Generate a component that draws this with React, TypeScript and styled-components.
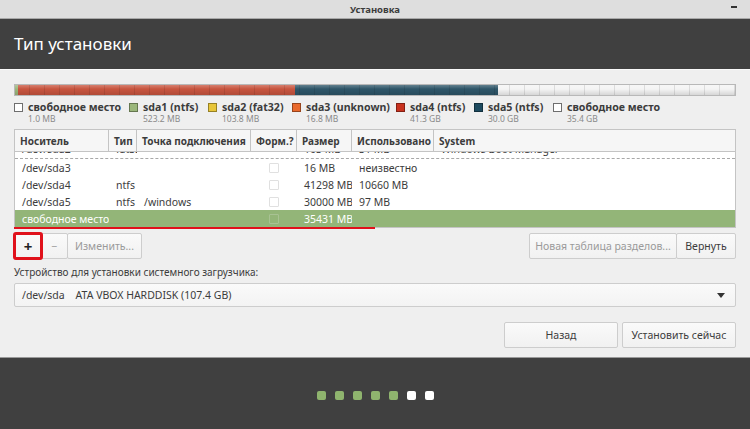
import React from "react";
import styled, { createGlobalStyle, css } from "styled-components";

const FONT = `"Noto Sans", "DejaVu Sans", sans-serif`;
const DARK = "#404040";
const CONTENT_BG = "#efefef";
const BORDER = "#c4c4c4";

const GlobalStyle = createGlobalStyle`
  html, body { margin: 0; padding: 0; background: ${CONTENT_BG}; }
  body { font-family: ${FONT}; }
  * { box-sizing: border-box; }
`;

const Window = styled.div`
  display: flex;
  flex-direction: column;
  width: 750px;
  height: 429px;
  overflow: hidden;
  font-family: ${FONT};
`;

const TitleBar = styled.div`
  position: relative;
  display: flex;
  align-items: center;
  justify-content: center;
  height: 19px;
  background: #dedede;
  border-bottom: 1px solid #a8a8a8;
  font-size: 9.5px;
  font-weight: 700;
  color: #3c3c3c;
`;

const Minimize = styled.span`
  position: absolute;
  right: 13px;
  top: 6px;
  width: 6px;
  height: 2px;
  background: #333;
`;

const Header = styled.div`
  display: flex;
  align-items: center;
  height: 51px;
  padding: 0 14px 2px;
  background: ${DARK};
  border-bottom: 1px solid #fafafa;
  color: #ffffff;
  font-size: 17px;
  font-weight: 400;
`;

const Content = styled.div`
  flex: 1;
  display: flex;
  flex-direction: column;
  padding: 14px 14px 0;
  background: ${CONTENT_BG};
`;

const Bar = styled.div`
  position: relative;
  display: flex;
  height: 12px;
  border: 1px solid #b8b8b8;
  overflow: hidden;

  &:after {
    content: "";
    position: absolute;
    inset: 0;
    background:
      repeating-linear-gradient(90deg, transparent 0 14px, rgba(0, 0, 0, 0.1) 14px 15px),
      linear-gradient(180deg, rgba(255,255,255,0.25) 0%, rgba(255,255,255,0) 40%, rgba(0,0,0,0.12) 100%);
  }
`;

const Segment = styled.div<{ $color: string }>`
  background: ${(p) => p.$color};
`;

const Legend = styled.div`
  display: flex;
  margin-top: 4px;
  height: 24px;
`;

const LegendItem = styled.div<{ $width: number }>`
  display: grid;
  grid-template-columns: 14px auto;
  grid-template-rows: 13px 11px;
  width: ${(p) => p.$width}px;
`;

const Swatch = styled.span<{ $color: string }>`
  width: 9px;
  height: 9px;
  margin-top: 3px;
  background: ${(p) => p.$color};
  border: 1px solid ${(p) => (p.$color === "#ffffff" ? "#6e6e6e" : "rgba(0,0,0,0.35)")};
`;

const LegendName = styled.span`
  font-size: 10.6px;
  font-weight: 700;
  color: #3c3c3c;
  white-space: nowrap;
  line-height: 14px;
`;

const LegendSize = styled.span`
  grid-column: 2;
  font-size: 8.5px;
  color: #8a8a8a;
  white-space: nowrap;
`;

const Table = styled.div`
  margin-top: 5px;
  border: 1px solid ${BORDER};
  background: #ffffff;
`;

const cols = "94px 28px 114px 46px 55px 82px 1fr";

const HeadRow = styled.div`
  display: grid;
  grid-template-columns: ${cols};
  height: 22px;
  background: #f6f6f6;
  border-bottom: 1px solid ${BORDER};
`;

const HeadCell = styled.div<{ $last?: boolean }>`
  display: flex;
  align-items: center;
  padding-left: 5px;
  font-size: 10px;
  font-weight: 700;
  color: #3c3c3c;
  white-space: nowrap;
  border-right: ${(p) => (p.$last ? "none" : `1px solid ${BORDER}`)};
`;

const Row = styled.div<{ $selected?: boolean; $partial?: boolean }>`
  display: grid;
  grid-template-columns: ${cols};
  grid-template-rows: 17px;
  height: 17px;
  align-items: center;
  font-size: 10.5px;
  color: ${(p) => (p.$selected ? "#ffffff" : "#3c3c3c")};
  background: ${(p) => (p.$selected ? "#93b578" : "transparent")};
  ${(p) =>
    p.$partial &&
    css`
      grid-template-rows: 7px;
      height: 7px;
      align-items: start;
      overflow: hidden;
      border-bottom: 1px dashed #a8a8a8;
      & > * {
        line-height: 17px;
        height: 17px;
        margin-top: -11px;
      }
    `}
`;

const Cell = styled.div`
  padding-left: 7px;
  white-space: nowrap;
  overflow: hidden;
`;

const CheckCell = styled.div`
  display: flex;
  align-items: center;
  justify-content: center;
`;

const Check = styled.span<{ $selected?: boolean }>`
  width: 10px;
  height: 10px;
  border: 1px solid ${(p) => (p.$selected ? "#a8c293" : "#e0e0e0")};
  border-radius: 1px;
  background: ${(p) => (p.$selected ? "#93b578" : "#fff")};
`;

const Annotation = styled.div`
  width: 361px;
  height: 2px;
  margin-top: -1px;
  background: #e0111b;
  position: relative;
`;

const ActionRow = styled.div`
  display: flex;
  justify-content: space-between;
  margin-top: 4px;
`;

const Group = styled.div`
  display: flex;
`;

const buttonBase = css`
  display: flex;
  align-items: center;
  justify-content: center;
  height: 26px;
  padding: 0 4px;
  font-family: ${FONT};
  font-size: 10.5px;
  white-space: nowrap;
  color: #3c3c3c;
  background: linear-gradient(180deg, #fafafa, #f1f1f1);
  border: 1px solid #cdcdcd;
  border-radius: 2px;
`;

const Button = styled.button<{ $width?: number; $disabled?: boolean; $marked?: boolean }>`
  ${buttonBase};
  width: ${(p) => (p.$width ? `${p.$width}px` : "auto")};
  color: ${(p) => (p.$disabled ? "#9a9a9a" : "#3c3c3c")};
  ${(p) =>
    p.$marked &&
    css`
      outline: 3px solid #e0111b;
      outline-offset: -2px;
      position: relative;
      z-index: 1;
      font-size: 15px;
      font-weight: 700;
      color: #222;
    `}
  & + & { margin-left: -1px; }
`;

const FieldLabel = styled.div`
  margin-top: 6px;
  font-size: 10px;
  color: #3c3c3c;
`;

const Combo = styled.div`
  display: flex;
  align-items: center;
  justify-content: space-between;
  height: 24px;
  margin-top: 4px;
  padding: 0 10px 0 7px;
  background: linear-gradient(180deg, #fafafa, #f3f3f3);
  border: 1px solid #cdcdcd;
  border-radius: 2px;
  font-size: 10.5px;
  color: #3c3c3c;
  white-space: pre;
`;

const Arrow = styled.span`
  width: 0;
  height: 0;
  border-left: 4px solid transparent;
  border-right: 4px solid transparent;
  border-top: 5px solid #333;
`;

const NavRow = styled.div`
  display: flex;
  justify-content: flex-end;
  gap: 5px;
  margin-top: 15px;
`;

const Footer = styled.div`
  display: flex;
  align-items: center;
  justify-content: center;
  height: 72px;
  padding-top: 4px;
  background: ${DARK};
  border-top: 1px solid #9a9a9a;
  gap: 9px;
`;

const Dot = styled.span<{ $done: boolean }>`
  width: 9px;
  height: 9px;
  border-radius: 2px;
  background: ${(p) => (p.$done ? "#8fb46e" : "#ffffff")};
`;

const segments = [
  { color: "#9bb77b", width: 3 },
  { color: "#c8553f", width: 278 },
  { color: "#2e5669", width: 203 },
  { color: "#f4f4f4", width: 238 },
];

const legend = [
  { name: "свободное место", size: "1.0 MB", color: "#ffffff", width: 115 },
  { name: "sda1 (ntfs)", size: "523.2 MB", color: "#9bb77b", width: 79 },
  { name: "sda2 (fat32)", size: "103.8 MB", color: "#e8c63a", width: 84 },
  { name: "sda3 (unknown)", size: "16.8 MB", color: "#e9692c", width: 104 },
  { name: "sda4 (ntfs)", size: "41.3 GB", color: "#c8321f", width: 78 },
  { name: "sda5 (ntfs)", size: "30.0 GB", color: "#1d4a5f", width: 79 },
  { name: "свободное место", size: "35.4 GB", color: "#ffffff", width: 120 },
];

const headers = ["Носитель", "Тип", "Точка подключения", "Форм.?", "Размер", "Использовано", "System"];

const rows = [
  { dev: "/dev/sda2", type: "fat32", mount: "", size: "103 MB", used: "31 MB", sys: "Windows Boot Manager", partial: true },
  { dev: "/dev/sda3", type: "", mount: "", size: "16 MB", used: "неизвестно", sys: "" },
  { dev: "/dev/sda4", type: "ntfs", mount: "", size: "41298 MB", used: "10660 MB", sys: "" },
  { dev: "/dev/sda5", type: "ntfs", mount: "/windows", size: "30000 MB", used: "97 MB", sys: "" },
  { dev: "свободное место", type: "", mount: "", size: "35431 MB", used: "", sys: "", selected: true },
];

export default function App() {
  return (
    <Window>
      <GlobalStyle />
      <TitleBar>
        Установка
        <Minimize />
      </TitleBar>
      <Header>Тип установки</Header>
      <Content>
        <Bar>
          {segments.map((s, i) => (
            <Segment key={i} $color={s.color} style={{ width: s.width }} />
          ))}
        </Bar>
        <Legend>
          {legend.map((l, i) => (
            <LegendItem key={i} $width={l.width}>
              <Swatch $color={l.color} />
              <LegendName>{l.name}</LegendName>
              <LegendSize>{l.size}</LegendSize>
            </LegendItem>
          ))}
        </Legend>
        <Table>
          <HeadRow>
            {headers.map((h, i) => (
              <HeadCell key={h} $last={i === headers.length - 1}>
                {h}
              </HeadCell>
            ))}
          </HeadRow>
          {rows.map((r) => (
            <Row key={r.dev} $selected={r.selected} $partial={r.partial}>
              <Cell>{r.dev}</Cell>
              <Cell>{r.type}</Cell>
              <Cell>{r.mount}</Cell>
              <CheckCell>{!r.partial && <Check $selected={r.selected} />}</CheckCell>
              <Cell>{r.size}</Cell>
              <Cell>{r.used}</Cell>
              <Cell>{r.sys}</Cell>
            </Row>
          ))}
        </Table>
        <Annotation />
        <ActionRow>
          <Group>
            <Button $width={28} $marked>+</Button>
            <Button $width={27} $disabled>−</Button>
            <Button $width={75} $disabled>Изменить...</Button>
          </Group>
          <Group>
            <Button $width={148} $disabled>Новая таблица разделов...</Button>
            <Button $width={60}>Вернуть</Button>
          </Group>
        </ActionRow>
        <FieldLabel>Устройство для установки системного загрузчика:</FieldLabel>
        <Combo>
          <span>{"/dev/sda    ATA VBOX HARDDISK (107.4 GB)"}</span>
          <Arrow />
        </Combo>
        <NavRow>
          <Button $width={114}>Назад</Button>
          <Button $width={114}>Установить сейчас</Button>
        </NavRow>
      </Content>
      <Footer>
        {[1, 1, 1, 1, 1, 0, 0].map((d, i) => (
          <Dot key={i} $done={d === 1} />
        ))}
      </Footer>
    </Window>
  );
}
